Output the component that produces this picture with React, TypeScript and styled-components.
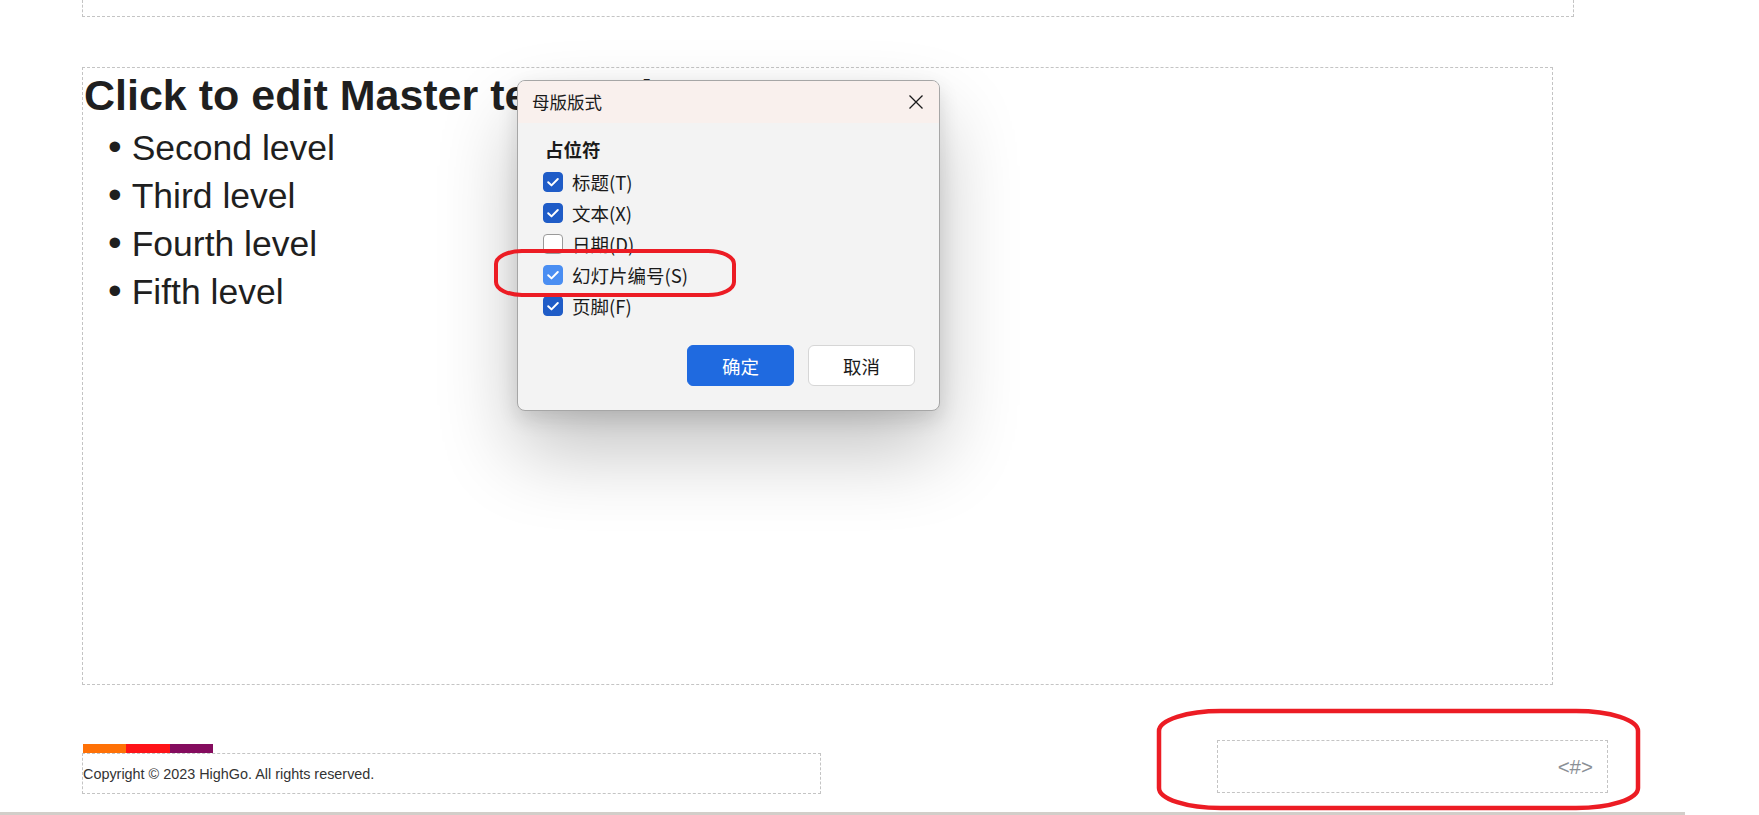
import React from "react";
import styled, { createGlobalStyle } from "styled-components";

const GlobalStyle = createGlobalStyle`
  html, body {
    margin: 0;
    padding: 0;
    background: #ffffff;
    overflow: hidden;
  }
  * { box-sizing: border-box; }
`;

const Page = styled.div`
  position: relative;
  width: 1759px;
  height: 815px;
  overflow: hidden;
  background: #ffffff;
  font-family: "Liberation Sans", Arial, sans-serif;
`;

const Slide = styled.div`
  display: flex;
  flex-direction: column;
  align-items: flex-start;
  padding-left: 82px;
`;

const dashed = `1px dashed #c4c4c4`;

const TopBox = styled.div`
  width: 1492px;
  height: 17px;
  border-left: ${dashed};
  border-right: ${dashed};
  border-bottom: ${dashed};
`;

const BodyBox = styled.div`
  margin-top: 50px;
  width: 1471px;
  height: 618px;
  border: ${dashed};
  padding: 1px 0 0 1px;
  color: #1f1f1f;
`;

const Heading = styled.div`
  font-size: 43px;
  font-weight: 700;
  line-height: 52px;
  white-space: nowrap;
`;

const BulletList = styled.ul`
  list-style: none;
  margin: 3px 0 0 0;
  padding: 0 0 0 24px;
`;

const BulletItem = styled.li`
  font-size: 35.5px;
  line-height: 48px;
  height: 48px;
  white-space: nowrap;
`;

const Bullet = styled.span`
  font-size: 39px;
  line-height: 0;
  margin-right: 10px;
`;

const FooterRow = styled.div`
  margin-top: 55px;
  width: 1526px;
  display: flex;
  justify-content: space-between;
  align-items: flex-start;
`;

const FooterLeft = styled.div`
  display: flex;
  flex-direction: column;
  padding-top: 4px;
  width: 739px;
`;

const BrandStripe = styled.div`
  display: flex;
  margin-left: 1px;
  height: 9px;
`;

const StripeSeg = styled.div<{ $color: string }>`
  width: 43.4px;
  height: 100%;
  background: ${(p) => p.$color};
`;

const FooterBox = styled.div`
  height: 41px;
  border: ${dashed};
  display: flex;
  align-items: center;
  font-size: 14.4px;
  color: #333333;
  white-space: nowrap;
`;

const NumberBox = styled.div`
  width: 391px;
  height: 53px;
  border: ${dashed};
  display: flex;
  align-items: center;
  justify-content: flex-end;
  padding-right: 14px;
  font-size: 20.5px;
  color: #8b9096;
`;

const BottomRule = styled.div`
  margin-top: 18px;
  width: 1685px;
  height: 3px;
  background: #d2cec9;
`;

/* Dialog */
const Dialog = styled.div`
  position: absolute;
  left: 517px;
  top: 80px;
  width: 423px;
  height: 331px;
  display: flex;
  flex-direction: column;
  background: #f3f3f3;
  border: 1px solid #a6a6a6;
  border-radius: 8px;
  overflow: hidden;
  box-shadow: 0 40px 80px rgba(0, 0, 0, 0.24), 0 8px 20px rgba(0, 0, 0, 0.12);
  font-family: "Noto Sans CJK SC", "Noto Sans", sans-serif;
  color: #1a1a1a;
`;

const TitleBar = styled.div`
  height: 42px;
  flex: none;
  display: flex;
  align-items: center;
  justify-content: space-between;
  padding: 0 8px 0 14px;
  background: #f9f0ed;
`;

const DialogTitle = styled.span`
  font-size: 17.5px;
  line-height: 24px;
`;

const CloseButton = styled.button`
  width: 30px;
  height: 30px;
  border: none;
  background: transparent;
  padding: 0;
  display: flex;
  align-items: center;
  justify-content: center;
  color: #1a1a1a;
`;

const DialogBody = styled.div`
  flex: 1;
  display: flex;
  flex-direction: column;
  padding: 14px 24px 24px 25px;
`;

const SectionLabel = styled.div`
  font-size: 18.5px;
  font-weight: 700;
  line-height: 24px;
  padding-left: 2px;
`;

const OptionList = styled.div`
  margin-top: 5px;
  display: flex;
  flex-direction: column;
`;

const OptionRow = styled.label`
  height: 31px;
  display: flex;
  align-items: center;
  gap: 9px;
  font-size: 18.5px;
  white-space: nowrap;
`;

const Box = styled.span<{ $checked: boolean; $hover?: boolean }>`
  width: 20px;
  height: 20px;
  border-radius: 4px;
  display: flex;
  align-items: center;
  justify-content: center;
  background: ${(p) => (p.$checked ? (p.$hover ? "#4a8ef2" : "#1f5cc7") : "#ffffff")};
  border: 1px solid ${(p) => (p.$checked ? (p.$hover ? "#4a8ef2" : "#1f5cc7") : "#9a9a9a")};
`;

const ButtonRow = styled.div`
  margin-top: auto;
  display: flex;
  justify-content: flex-end;
  gap: 14px;
`;

const Button = styled.button<{ $primary?: boolean }>`
  width: 107px;
  height: 41px;
  border-radius: 6px;
  font-family: "Noto Sans CJK SC", "Noto Sans", sans-serif;
  font-size: 18.5px;
  cursor: pointer;
  background: ${(p) => (p.$primary ? "#1f6ae0" : "#ffffff")};
  color: ${(p) => (p.$primary ? "#ffffff" : "#1a1a1a")};
  border: 1px solid ${(p) => (p.$primary ? "#1f6ae0" : "#d6d6d6")};
`;

const Annotation = styled.svg`
  position: absolute;
  overflow: visible;
  pointer-events: none;
`;

const CheckMark = () => (
  <svg width="16" height="16" viewBox="0 0 16 16" fill="none">
    <path d="M3.2 8.2l3.3 3.2L12.8 5" stroke="#ffffff" strokeWidth="2" strokeLinecap="round" strokeLinejoin="round" />
  </svg>
);

const options = [
  { label: "标题(T)", checked: true },
  { label: "文本(X)", checked: true },
  { label: "日期(D)", checked: false },
  { label: "幻灯片编号(S)", checked: true, hover: true },
  { label: "页脚(F)", checked: true },
];

const levels = ["Second level", "Third level", "Fourth level", "Fifth level"];

export default function App() {
  return (
    <>
      <GlobalStyle />
      <Page>
        <Slide>
          <TopBox />
          <BodyBox>
            <Heading>Click to edit Master text styles</Heading>
            <BulletList>
              {levels.map((l) => (
                <BulletItem key={l}>
                  <Bullet>•</Bullet>
                  {l}
                </BulletItem>
              ))}
            </BulletList>
          </BodyBox>
          <FooterRow>
            <FooterLeft>
              <BrandStripe>
                <StripeSeg $color="#ff7106" />
                <StripeSeg $color="#ff1418" />
                <StripeSeg $color="#840c5e" />
              </BrandStripe>
              <FooterBox>Copyright © 2023 HighGo. All rights reserved.</FooterBox>
            </FooterLeft>
            <NumberBox>&lt;#&gt;</NumberBox>
          </FooterRow>
        </Slide>
        <BottomRule />

        <Dialog>
          <TitleBar>
            <DialogTitle>母版版式</DialogTitle>
            <CloseButton aria-label="close">
              <svg width="16" height="16" viewBox="0 0 16 16">
                <path d="M1.5 1.5l13 13M14.5 1.5l-13 13" stroke="#1a1a1a" strokeWidth="1.3" />
              </svg>
            </CloseButton>
          </TitleBar>
          <DialogBody>
            <SectionLabel>占位符</SectionLabel>
            <OptionList>
              {options.map((o) => (
                <OptionRow key={o.label}>
                  <Box $checked={o.checked} $hover={o.hover}>
                    {o.checked && <CheckMark />}
                  </Box>
                  {o.label}
                </OptionRow>
              ))}
            </OptionList>
            <ButtonRow>
              <Button $primary>确定</Button>
              <Button>取消</Button>
            </ButtonRow>
          </DialogBody>
        </Dialog>

        <Annotation style={{ left: 494, top: 249, width: 242, height: 48 }} viewBox="0 0 242 48">
          <rect x="2" y="2" width="238" height="44" rx="26" ry="13" fill="none" stroke="#ec1c24" strokeWidth="4" />
        </Annotation>
        <Annotation style={{ left: 1157, top: 709, width: 483, height: 101 }} viewBox="0 0 483 101">
          <rect x="2" y="2" width="479" height="97" rx="62" ry="20" fill="none" stroke="#ec1c24" strokeWidth="4.5" />
        </Annotation>
      </Page>
    </>
  );
}
